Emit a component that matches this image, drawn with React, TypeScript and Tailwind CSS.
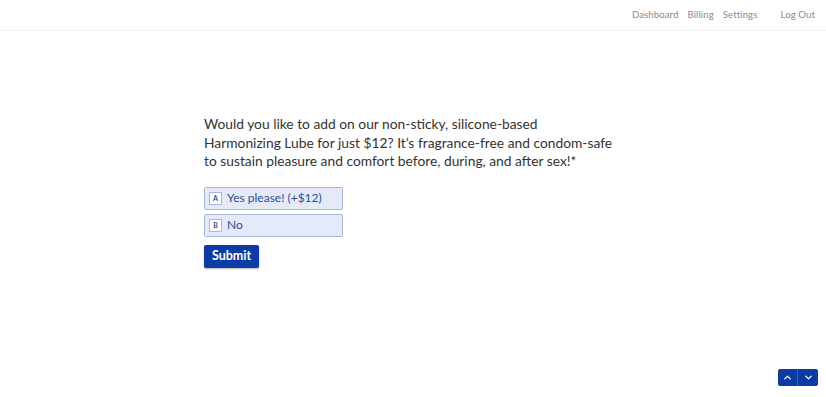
import { ChevronUp, ChevronDown } from "lucide-react";

const options = [
  { key: "A", label: "Yes please! (+$12)" },
  { key: "B", label: "No" },
];

export default function App() {
  return (
    <div className="relative h-[397px] w-full bg-white font-['Lato',sans-serif]">
      {/* top nav */}
      <header className="flex h-[31px] items-center justify-end border-b border-gray-100 pr-[11px] text-[9.6px] tracking-[0.1px] text-[#8a8a8a]">
        <nav className="flex gap-[9px]">
          <a>Dashboard</a>
          <a>Billing</a>
          <a>Settings</a>
        </nav>
        <a className="ml-[23px]">Log Out</a>
      </header>

      <main className="pl-[204px] pt-[84px]">
        <p className="w-[420px] whitespace-nowrap text-[13.8px] leading-[18.5px] text-[#333]">
          Would you like to add on our non-sticky, silicone-based
          <br />
          Harmonizing Lube for just $12? It’s fragrance-free and condom-safe
          <br />
          to sustain pleasure and comfort before, during, and after sex!*
        </p>

        <div className="mt-[16px] flex flex-col gap-[4px]">
          {options.map((o) => (
            <button
              key={o.key}
              className="flex h-[23px] w-[139px] items-center gap-[5px] rounded-[2px] border border-[#a6b6dd] bg-[#e4eaf7] pl-[4px] text-left text-[12px] text-[#2c4a9c]"
            >
              <span className="flex h-[13px] w-[13px] items-center justify-center border border-[#a6b6dd] bg-white text-[7px] font-bold text-[#2c4a9c]">
                {o.key}
              </span>
              {o.label}
            </button>
          ))}
        </div>

        <button className="mt-[8px] h-[23px] w-[55px] rounded-[2px] bg-[#0c3ba6] text-[12.5px] font-bold text-white shadow-[0_1px_2px_rgba(0,0,0,0.3)]">
          Submit
        </button>
      </main>

      <div className="absolute bottom-[11px] right-[8px] flex overflow-hidden rounded-[2px] bg-[#0c3ba6]">
        <button className="flex h-[17px] w-[20px] items-center justify-center border-r border-[#3a61bd] text-white">
          <ChevronUp size={11} strokeWidth={3} />
        </button>
        <button className="flex h-[17px] w-[20px] items-center justify-center text-white">
          <ChevronDown size={11} strokeWidth={3} />
        </button>
      </div>
    </div>
  );
}
